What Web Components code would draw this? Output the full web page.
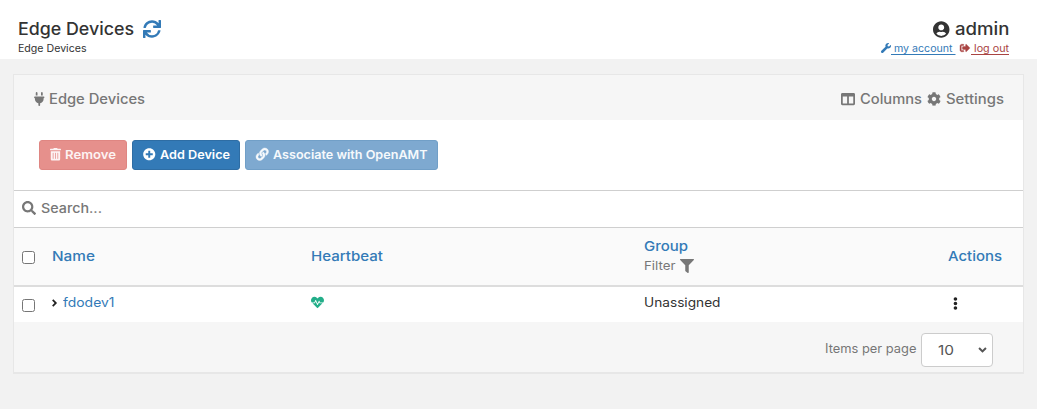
<!DOCTYPE html>
<html lang="en"><head><meta charset="utf-8"><title>Edge Devices</title>
<style>
html,body{margin:0;height:100%;background:#f2f2f2;overflow:hidden}
body{font-family:Inter,"Open Sans",sans-serif;color:#333}
</style></head><body>
<edge-page></edge-page>
<script>
const ICONS={
sync:[512,'M440.65 12.57l4 82.77A247.16 247.16 0 0 0 255.83 8C134.73 8 33.91 94.92 12.29 209.82A12 12 0 0 0 24.09 224h49.05a12 12 0 0 0 11.67-9.26 175.91 175.91 0 0 1 317-56.94l-101.46-4.86a12 12 0 0 0-12.57 12v47.41a12 12 0 0 0 12 12H500a12 12 0 0 0 12-12V12a12 12 0 0 0-12-12h-47.37a12 12 0 0 0-11.98 12.57zM255.83 432a175.61 175.61 0 0 1-146-77.8l101.8 4.87a12 12 0 0 0 12.57-12v-47.4a12 12 0 0 0-12-12H12a12 12 0 0 0-12 12V500a12 12 0 0 0 12 12h47.35a12 12 0 0 0 12-12.6l-4.15-82.57A247.17 247.17 0 0 0 255.83 504c121.11 0 221.93-86.92 243.55-201.82a12 12 0 0 0-11.8-14.18h-49.05a12 12 0 0 0-11.67 9.26A175.86 175.86 0 0 1 255.83 432z'],
user:[496,'M248 8C111 8 0 119 0 256s111 248 248 248 248-111 248-248S385 8 248 8zm0 96c48.6 0 88 39.4 88 88s-39.4 88-88 88-88-39.4-88-88 39.4-88 88-88zm0 344c-58.7 0-111.3-26.6-146.5-68.2 18.8-35.4 55.6-59.8 98.5-59.8 2.4 0 4.8.4 7.1 1.1 13 4.2 26.6 6.9 40.9 6.9 14.3 0 28-2.7 40.9-6.9 2.3-.7 4.7-1.1 7.1-1.1 42.9 0 79.7 24.4 98.5 59.8C359.3 421.4 306.7 448 248 448z'],
wrench:[512,'M507.73 109.1c-2.24-9.03-13.54-12.09-20.12-5.51l-74.36 74.36-67.88-11.31-11.31-67.88 74.36-74.36c6.62-6.62 3.43-17.9-5.66-20.16-47.38-11.74-99.55.91-136.58 37.93-39.64 39.64-50.55 97.1-34.05 147.2L18.74 402.76c-24.99 24.99-24.99 65.51 0 90.5 24.99 24.99 65.51 24.99 90.5 0l213.21-213.21c50.12 16.71 107.47 5.68 147.37-34.22 37.07-37.07 49.7-89.32 37.91-136.73z'],
signout:[512,'M497 273L329 441c-15 15-41 4.5-41-17v-96H152c-13.3 0-24-10.7-24-24v-96c0-13.3 10.7-24 24-24h136V88c0-21.4 25.9-32 41-17l168 168c9.3 9.4 9.3 24.6 0 34zM192 436v-40c0-6.6-5.4-12-12-12H96c-17.7 0-32-14.3-32-32V160c0-17.7 14.3-32 32-32h84c6.6 0 12-5.4 12-12V76c0-6.6-5.4-12-12-12H96c-53 0-96 43-96 96v192c0 53 43 96 96 96h84c6.6 0 12-5.4 12-12z'],
plug:[384,'M96 0C78.3 0 64 14.3 64 32v96h64V32c0-17.7-14.3-32-32-32zM288 0c-17.7 0-32 14.3-32 32v96h64V32c0-17.7-14.3-32-32-32zM32 160c-17.7 0-32 14.3-32 32s14.3 32 32 32v32c0 77.4 55 142 128 156.8V480c0 17.7 14.3 32 32 32s32-14.3 32-32V412.8C297 398 352 333.4 352 256V224c17.7 0 32-14.3 32-32s-14.3-32-32-32H32z'],
columns:[512,'M464 32H48C21.49 32 0 53.49 0 80v352c0 26.51 21.49 48 48 48h416c26.51 0 48-21.49 48-48V80c0-26.51-21.49-48-48-48zM224 416H64V160h160v256zm224 0H288V160h160v256z'],
cog:[512,'M487.4 315.7l-42.6-24.6c4.3-23.2 4.3-47 0-70.2l42.6-24.6c4.9-2.8 7.1-8.6 5.5-14-11.1-35.6-30-67.8-54.7-94.6-3.8-4.1-10-5.1-14.8-2.3L380.8 110c-17.9-15.4-38.5-27.3-60.8-35.1V25.8c0-5.6-3.9-10.5-9.4-11.7-36.7-8.2-74.3-7.8-109.2 0-5.5 1.2-9.4 6.1-9.4 11.7V75c-22.2 7.9-42.8 19.8-60.8 35.1L88.7 85.5c-4.9-2.8-11-1.9-14.8 2.3-24.7 26.7-43.6 58.9-54.7 94.6-1.7 5.4.6 11.2 5.5 14L67.3 221c-4.3 23.2-4.3 47 0 70.2l-42.6 24.6c-4.9 2.8-7.1 8.6-5.5 14 11.1 35.6 30 67.8 54.7 94.6 3.8 4.1 10 5.1 14.8 2.3l42.6-24.6c17.9 15.4 38.5 27.3 60.8 35.1v49.2c0 5.6 3.9 10.5 9.4 11.7 36.7 8.2 74.3 7.8 109.2 0 5.5-1.2 9.4-6.1 9.4-11.7v-49.2c22.2-7.9 42.8-19.8 60.8-35.1l42.6 24.6c4.9 2.8 11 1.9 14.8-2.3 24.7-26.7 43.6-58.9 54.7-94.6 1.5-5.5-.7-11.3-5.6-14.1zM256 336c-44.1 0-80-35.9-80-80s35.9-80 80-80 80 35.9 80 80-35.9 80-80 80z'],
trash:[448,'M32 464a48 48 0 0 0 48 48h288a48 48 0 0 0 48-48V128H32zm272-256a16 16 0 0 1 32 0v224a16 16 0 0 1-32 0zm-96 0a16 16 0 0 1 32 0v224a16 16 0 0 1-32 0zm-96 0a16 16 0 0 1 32 0v224a16 16 0 0 1-32 0zM432 32H312l-9.4-18.7A24 24 0 0 0 281.1 0H166.8a23.72 23.72 0 0 0-21.4 13.3L136 32H16A16 16 0 0 0 0 48v32a16 16 0 0 0 16 16h416a16 16 0 0 0 16-16V48a16 16 0 0 0-16-16z'],
plus:[512,'M256 8C119 8 8 119 8 256s111 248 248 248 248-111 248-248S393 8 256 8zm144 276c0 6.6-5.4 12-12 12h-92v92c0 6.6-5.4 12-12 12h-56c-6.6 0-12-5.4-12-12v-92h-92c-6.6 0-12-5.4-12-12v-56c0-6.6 5.4-12 12-12h92v-92c0-6.6 5.4-12 12-12h56c6.6 0 12 5.4 12 12v92h92c6.6 0 12 5.4 12 12v56z'],
link:[512,'M326.612 185.391c59.747 59.809 58.927 155.698.36 214.59-.11.12-.24.25-.36.37l-67.2 67.2c-59.27 59.27-155.699 59.262-214.96 0-59.27-59.26-59.27-155.7 0-214.96l37.106-37.106c9.84-9.84 26.786-3.3 27.294 10.606.648 17.722 3.826 35.527 9.69 52.721 1.986 5.822.567 12.262-3.783 16.612l-13.087 13.087c-28.026 28.026-28.905 73.66-1.155 101.96 28.024 28.579 74.086 28.749 102.325.51l67.2-67.19c28.191-28.191 28.073-73.757 0-101.83-3.701-3.694-7.429-6.564-10.341-8.569a16.037 16.037 0 0 1-6.947-12.606c-.396-10.567 3.348-21.456 11.698-29.806l21.054-21.055c5.521-5.521 14.182-6.199 20.584-1.731a152.482 152.482 0 0 1 20.522 17.197zM467.547 44.449c-59.261-59.262-155.69-59.27-214.96 0l-67.2 67.2c-.12.12-.25.25-.36.37-58.566 58.892-59.387 154.781.36 214.59a152.454 152.454 0 0 0 20.521 17.196c6.402 4.468 15.064 3.789 20.584-1.731l21.054-21.055c8.35-8.35 12.094-19.239 11.698-29.806a16.037 16.037 0 0 0-6.947-12.606c-2.912-2.005-6.64-4.875-10.341-8.569-28.073-28.073-28.191-73.639 0-101.83l67.2-67.19c28.239-28.239 74.3-28.069 102.325.51 27.75 28.3 26.872 73.934-1.155 101.96l-13.087 13.087c-4.35 4.35-5.769 10.79-3.783 16.612 5.864 17.194 9.042 34.999 9.69 52.721.509 13.906 17.454 20.446 27.294 10.606l37.106-37.106c59.271-59.259 59.271-155.699.001-214.959z'],
search:[512,'M505 442.7L405.3 343c-4.5-4.5-10.6-7-17-7H372c27.6-35.3 44-79.7 44-128C416 93.1 322.9 0 208 0S0 93.1 0 208s93.1 208 208 208c48.3 0 92.7-16.4 128-44v16.3c0 6.4 2.5 12.5 7 17l99.7 99.7c9.4 9.4 24.6 9.4 33.9 0l28.3-28.3c9.4-9.4 9.4-24.6.1-34zM208 336c-70.7 0-128-57.2-128-128 0-70.7 57.2-128 128-128 70.7 0 128 57.2 128 128 0 70.7-57.2 128-128 128z'],
heart:[512,'M320.2 243.8l-49.7 99.4c-6 12.1-23.4 11.7-28.9-.6l-56.9-126.3-30 71.7H60.6l182.5 186.5c7.1 7.3 18.6 7.3 25.7 0L451.4 288H342.3l-22.1-44.2zM473.7 73.9l-2.4-2.5c-51.5-52.6-135.8-52.6-187.4 0L256 100l-27.9-28.5c-51.5-52.7-135.9-52.7-187.4 0l-2.4 2.4C-10.4 123.7-12.5 203 31 256h102.4l35.9-86.2c5.4-12.9 23.6-13.2 29.4-.4l58.2 129.3 49-97.9c5.9-11.8 22.7-11.8 28.6 0l27.6 55.2H481c43.5-53 41.4-132.3-7.3-182.1z'],
filter:[512,'M487.976 0H24.028C2.71 0-8.047 25.866 7.058 40.971L192 225.941V432c0 7.831 3.821 15.17 10.237 19.662l80 55.98C298.02 518.69 320 507.493 320 487.98V225.941l184.947-184.97C520.021 25.896 509.338 0 487.976 0z'],
chevron:[512,'M150 20L386 256 150 492 70 412 226 256 70 100z'],
down:[512,'M20 150L256 386 492 150 412 70 256 226 100 70z'],
dots:[192,'M96 8a72 72 0 1 1 0 144a72 72 0 1 1 0-144zM96 184a72 72 0 1 1 0 144a72 72 0 1 1 0-144zM96 360a72 72 0 1 1 0 144a72 72 0 1 1 0-144z']};
class UiIcon extends HTMLElement{
 connectedCallback(){
  const [w,d]=ICONS[this.getAttribute('name')],h=+this.getAttribute('size'),b=+this.getAttribute('bold')||0;
  this.attachShadow({mode:'open'}).innerHTML=`<style>:host{display:block;flex:none}svg{display:block;overflow:visible}</style><svg width="${w/512*h}" height="${h}" viewBox="0 0 ${w} 512"><path fill="currentColor" stroke="currentColor" stroke-width="${b}" d="${d}"/></svg>`;
 }}
customElements.define('ui-icon',UiIcon);

/* Text stretched horizontally so that it occupies the width in its "w" attribute. */
class UiText extends HTMLElement{
 connectedCallback(){
  const r=this.attachShadow({mode:'open'});
  r.innerHTML='<style>:host{display:block;flex:none;white-space:pre}span{display:inline-block;vertical-align:top;transform-origin:0 50%}:host([underline]) span{text-decoration:underline;text-decoration-thickness:1px;text-underline-offset:2px}</style><span><slot></slot></span>';
  const s=r.querySelector('span'),w=+this.getAttribute('w');
  if(w){s.style.transform='scaleX('+w/s.getBoundingClientRect().width+')';this.style.width=w+'px';}
 }}
customElements.define('ui-text',UiText);

class UiButton extends HTMLElement{
 connectedCallback(){
  this.attachShadow({mode:'open'}).innerHTML=`<style>:host{display:flex;align-items:center;box-sizing:border-box;height:30px;padding:0 0 1px 10px;gap:4.5px;border:1px solid;border-radius:3px;font:600 12px/18px Inter,sans-serif;flex:none}
  :host([kind=danger]){width:88px;background:#e6908c;border-color:#df8682;color:#fdf3f3}
  :host([kind=primary]){width:108px;background:#337ab7;border-color:#2e6da4;color:#fff}
  :host([kind=muted]){width:193px;background:#7ea9d0;border-color:#719fc7;color:#f6f9fc}</style><slot></slot>`;
 }}
customElements.define('ui-button',UiButton);

class UiCheck extends HTMLElement{
 connectedCallback(){
  this.attachShadow({mode:'open'}).innerHTML='<style>:host{display:block;box-sizing:border-box;width:13px;height:13px;border:1px solid #767676;border-radius:2.5px;background:#fff}</style>';
 }}
customElements.define('ui-check',UiCheck);

class PageHeader extends HTMLElement{
 connectedCallback(){
  this.attachShadow({mode:'open'}).innerHTML=`<style>
  :host{display:flex;justify-content:space-between;box-sizing:border-box;height:59px;background:#fff;padding:17px 28px 0 18px}
  .row{display:flex;align-items:center;height:24px;font:500 17px/24px Inter,sans-serif}
  .sub{font:400 10.3px/14px Inter,sans-serif;display:flex;align-items:center}
  .right{display:flex;flex-direction:column;align-items:flex-end}
  a{display:flex;align-items:center}
  .blue{color:#337ab7}.red{color:#a94442;margin-left:5px}</style>
  <div><div class="row"><ui-text w="116">Edge Devices</ui-text><ui-icon class="blue" style="margin-left:9px" name="sync" size="18"></ui-icon></div>
  <div class="sub"><ui-text w="68.5">Edge Devices</ui-text></div></div>
  <div class="right"><div class="row"><ui-icon name="user" size="17" style="margin-right:5px"></ui-icon><ui-text w="54.5">admin</ui-text></div>
  <div class="sub"><a class="blue"><ui-icon name="wrench" size="10"></ui-icon><ui-text underline w="64.5"> my account </ui-text></a><a class="red"><ui-icon name="signout" size="10" bold="20" style="margin-right:1px"></ui-icon><ui-text underline w="38"> log out</ui-text></a></div></div>`;
 }}
customElements.define('page-header',PageHeader);

class DeviceTable extends HTMLElement{
 connectedCallback(){
  this.attachShadow({mode:'open'}).innerHTML=`<style>
  :host{display:block}
  .r{display:grid;grid-template-columns:37.5px 259px 333px 304px 1fr;box-sizing:border-box}
  .r>div{display:flex}
  .head{height:60px;background:#fafafa;border-top:1px solid #cfcfcf;border-bottom:2px solid #ddd;font:500 13.5px/20px Inter,sans-serif;color:#337ab7}
  .body{height:35px;background:#fff;font:400 12.7px/18px Inter,sans-serif}
  .head>div.group{flex-direction:column}
  .filter{display:flex;align-items:center;color:#777;font:400 12px/18px Inter,sans-serif;gap:5px;margin-top:1px}
  .blue{color:#337ab7}</style>
  <div class="r head">
   <div style="padding:23px 0 0 8px"><ui-check></ui-check></div>
   <div style="padding-top:18px"><ui-text w="43">Name</ui-text></div>
   <div style="padding-top:18px"><ui-text w="72">Heartbeat</ui-text></div>
   <div class="group" style="padding-top:8px"><ui-text w="44">Group</ui-text><div class="filter"><ui-text w="31.5">Filter</ui-text><ui-icon name="filter" size="14"></ui-icon></div></div>
   <div style="padding-top:18px"><ui-text w="54">Actions</ui-text></div>
  </div>
  <div class="r body">
   <div style="padding:12px 0 0 8px"><ui-check></ui-check></div>
   <div style="padding-top:7px"><ui-icon name="chevron" size="8" style="margin:5px 4px 0 -1px;color:#222"></ui-icon><ui-text class="blue" w="51.5">fdodev1</ui-text></div>
   <div style="padding-top:9px"><ui-icon name="heart" size="13" style="color:#23ae89"></ui-icon></div>
   <div style="padding-top:7px;color:#333"><ui-text w="76.5">Unassigned</ui-text></div>
   <div style="padding:10px 0 0 5px"><ui-icon name="dots" size="13" style="color:#222"></ui-icon></div>
  </div>`;
 }}
customElements.define('device-table',DeviceTable);

class DeviceCard extends HTMLElement{
 connectedCallback(){
  this.attachShadow({mode:'open'}).innerHTML=`<style>
  :host{display:block;box-sizing:border-box;margin:15px 13px 0;height:300px;border:1px solid #e7e7e7;border-bottom-width:2px;background:#fff}
  .bar{display:flex;align-items:center;justify-content:space-between;height:45px;padding:3px 19.5px 0 20px;background:#f6f6f6;color:#777;font:500 13.8px/20px Inter,sans-serif;box-sizing:border-box}
  .g{display:flex;align-items:center;gap:4.7px}
  .actions{display:flex;gap:5px;height:70px;box-sizing:border-box;padding:20px 25px}
  .search{display:flex;align-items:center;gap:5px;height:37px;box-sizing:border-box;border-top:1px solid #cfcfcf;padding:0 0 2px 8px;color:#777;font:500 13px/18px Inter,sans-serif}
  .foot{display:flex;justify-content:flex-end;height:50px;box-sizing:border-box;background:#f6f6f6;padding:11px 30px 0 0;color:#767676;font:400 12.5px/18px Inter,sans-serif;gap:5px}
  .select{display:flex;align-items:center;justify-content:space-between;width:72px;height:34px;box-sizing:border-box;border:1px solid #ccc;border-radius:4px;background:#fff;color:#555;padding:0 5px 0 16px;font-size:13.5px}
  </style>
  <div class="bar"><div class="g"><ui-icon name="plug" size="14"></ui-icon><ui-text w="96">Edge Devices</ui-text></div>
  <div class="g"><ui-icon name="columns" size="14"></ui-icon><ui-text w="62">Columns</ui-text><ui-icon name="cog" size="14"></ui-icon><ui-text w="58">Settings</ui-text></div></div>
  <div class="actions"><ui-button kind="danger"><ui-icon name="trash" size="12.5"></ui-icon><ui-text w="51">Remove</ui-text></ui-button><ui-button kind="primary"><ui-icon name="plus" size="12.5"></ui-icon><ui-text w="70">Add Device</ui-text></ui-button><ui-button kind="muted"><ui-icon name="link" size="12.5" bold="16"></ui-icon><ui-text w="154.5">Associate with OpenAMT</ui-text></ui-button></div>
  <div class="search"><ui-icon name="search" size="14"></ui-icon><ui-text w="61">Search...</ui-text></div>
  <device-table></device-table>
  <div class="foot"><ui-text style="margin-top:7px" w="91.5">Items per page</ui-text><div class="select"><ui-text w="16">10</ui-text><ui-icon name="down" size="9"></ui-icon></div></div>`;
 }}
customElements.define('device-card',DeviceCard);

class EdgePage extends HTMLElement{
 connectedCallback(){
  this.attachShadow({mode:'open'}).innerHTML='<style>:host{display:block;height:409px;background:#f2f2f2}</style><page-header></page-header><device-card></device-card>';
 }}
customElements.define('edge-page',EdgePage);
</script></body></html>
